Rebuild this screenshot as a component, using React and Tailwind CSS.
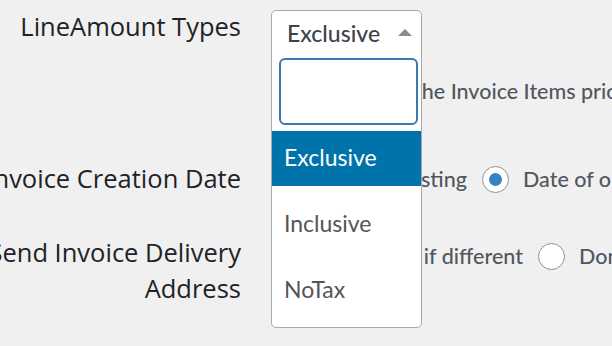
export default function App() {
  const label = "flex flex-col items-end text-[25.5px] leading-[36px] text-[#1d2327] whitespace-nowrap";
  const field = "text-[21.5px] font-medium text-[#50575e] whitespace-nowrap";
  const ff = { fontFamily: "Lato, 'Liberation Sans', sans-serif" };
  return (
    <div
      className="relative w-[612px] h-[346px] overflow-hidden bg-[#f0f0f1]"
      style={{ fontFamily: "'Open Sans', 'Noto Sans', sans-serif" }}
    >
      <div className="flex flex-col pt-[8px]">
        {/* Row 1 */}
        <div className="flex h-[152px]">
          <div className={`w-[241px] shrink-0 ${label}`}>
            <span>LineAmount Types</span>
          </div>
          <div className="ml-[31px] flex flex-col" style={ff}>
            <div className="h-[68px]" />
            <div className={`flex ${field} leading-[30px]`}>
              <span className="w-[137px] shrink-0 text-right overflow-hidden">Select whether</span>
              <span className="ml-[5px]">the Invoice Items prices include tax</span>
            </div>
          </div>
        </div>
        {/* Row 2 */}
        <div className="flex h-[74px]">
          <div className={`w-[241px] shrink-0 ${label}`}>
            <span>Invoice Creation Date</span>
          </div>
          <div className={`ml-[31px] mt-[6px] flex items-center h-[27px] ${field}`} style={ff}>
            <span className="w-[195px] shrink-0 text-right overflow-hidden">Date of posting</span>
            <span className="ml-[15px] w-[27px] h-[27px] shrink-0 rounded-full border border-[#8c8f94] bg-white flex items-center justify-center">
              <span className="w-[13px] h-[13px] rounded-full bg-[#3582c4]" />
            </span>
            <span className="ml-[14px]">Date of order</span>
          </div>
        </div>
        {/* Row 3 */}
        <div className="flex">
          <div className={`w-[241px] shrink-0 ${label}`}>
            <span>Send Invoice Delivery</span>
            <span>Address</span>
          </div>
          <div className={`ml-[31px] mt-[9px] flex items-center h-[27px] ${field}`} style={ff}>
            <span className="w-[251px] shrink-0 text-right overflow-hidden">Send if different</span>
            <span className="ml-[15px] w-[27px] h-[27px] shrink-0 rounded-full border border-[#8c8f94] bg-white" />
            <span className="ml-[14px]">Don't send</span>
          </div>
        </div>
      </div>

      {/* Open dropdown */}
      <div
        className="absolute left-[271px] top-[10px] w-[151px] h-[318px] bg-white border border-[#a7aaad] rounded-[5px] overflow-hidden flex flex-col"
        style={ff}
      >
        <div className="h-[43px] shrink-0 flex items-center pl-[15px] pr-[9px] pt-[2px]">
          <span className="text-[23px] font-medium text-[#3c434a] flex-1">Exclusive</span>
          <span className="w-0 h-0 border-l-[7.5px] border-r-[7.5px] border-b-[7px] border-l-transparent border-r-transparent border-b-[#8c8c8c] mb-[2px]" />
        </div>
        <div className="shrink-0 pl-[7px] pr-[3px] pt-[4px] pb-[6px]">
          <div className="h-[67px] rounded-[6px] border-2 border-[#3a79b5] bg-white" />
        </div>
        <div className="flex flex-col gap-[11px]">
          <div className="h-[55px] bg-[#0073aa] text-white text-[23px] flex items-center pl-[12px] pb-[2px]">Exclusive</div>
          <div className="h-[55px] text-[#555] text-[23px] flex items-center pl-[12px] pb-[2px]">Inclusive</div>
          <div className="h-[55px] text-[#555] text-[23px] flex items-center pl-[12px] pb-[2px]">NoTax</div>
        </div>
      </div>
    </div>
  );
}
